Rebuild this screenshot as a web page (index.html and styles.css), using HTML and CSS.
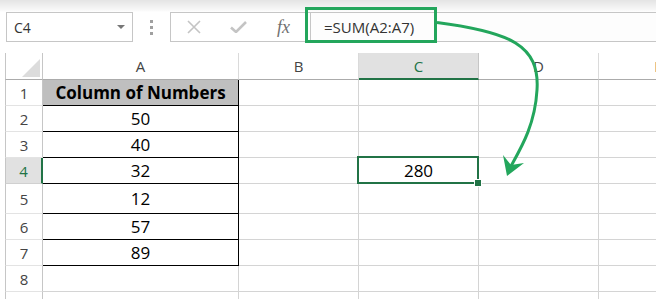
FILE: index.html
```html
<!DOCTYPE html>
<html lang="en">
<head>
  <meta charset="UTF-8" />
  <title>SUM formula</title>
  <link rel="stylesheet" href="styles.css">
</head>
<body>

  <!-- Formula bar -->
  <div class="topbar">
    <div class="namebox"><span>C4</span><i class="caret"></i></div>
    <div class="grip"><i></i><i></i><i></i></div>
    <div class="fxbox">
      <span class="ico">
        <svg width="14" height="14" viewBox="0 0 14 14"><path d="M1 1L13 13M13 1L1 13" stroke="#c4c4c4" stroke-width="1.6" fill="none"/></svg>
      </span>
      <span class="ico">
        <svg width="17" height="12" viewBox="0 0 17 12"><path d="M1 6.5L6 11L16 1" stroke="#c4c4c4" stroke-width="2.6" fill="none"/></svg>
      </span>
      <span class="ico fx">fx</span>
    </div>
    <div class="formula">=SUM(A2:A7)</div>
  </div>

  <!-- Sheet grid -->
  <div class="sheet">
    <div class="corner"><i></i></div>
    <div class="ch">A</div><div class="ch">B</div><div class="ch sel">C</div><div class="ch">D</div><div class="ch">E</div>

    <div class="rh">1</div><div class="c t hd">Column of Numbers</div><div class="c"></div><div class="c"></div><div class="c"></div><div class="c"></div>
    <div class="rh">2</div><div class="c t">50</div><div class="c"></div><div class="c"></div><div class="c"></div><div class="c"></div>
    <div class="rh">3</div><div class="c t">40</div><div class="c"></div><div class="c"></div><div class="c"></div><div class="c"></div>
    <div class="rh sel">4</div><div class="c t">32</div><div class="c"></div><div class="c cur">280</div><div class="c"></div><div class="c"></div>
    <div class="rh">5</div><div class="c t">12</div><div class="c"></div><div class="c"></div><div class="c"></div><div class="c"></div>
    <div class="rh">6</div><div class="c t">57</div><div class="c"></div><div class="c"></div><div class="c"></div><div class="c"></div>
    <div class="rh">7</div><div class="c t">89</div><div class="c"></div><div class="c"></div><div class="c"></div><div class="c"></div>
    <div class="rh">8</div><div class="c"></div><div class="c"></div><div class="c"></div><div class="c"></div><div class="c"></div>
    <div class="rh">9</div><div class="c"></div><div class="c"></div><div class="c"></div><div class="c"></div><div class="c"></div>
  </div>

  <!-- Callout over the formula -->
  <div class="callout"></div>
  <svg class="arrow" width="656" height="299" viewBox="0 0 656 299">
    <path d="M437 22.5C510 32 540 45 537 90C535 125 521 148 511 166" stroke="#23a65c" stroke-width="3" fill="none"/>
    <polygon points="507,176 503,155 511,165 524,163" fill="#23a65c"/>
  </svg>

</body>
</html>
```

FILE: styles.css
```css
* { margin: 0; padding: 0; box-sizing: border-box; }
body {
  width: 656px;
  height: 299px;
  overflow: hidden;
  position: relative;
  background: #fff;
  font-family: "Open Sans", "Liberation Sans", sans-serif;
}

/* formula bar */
.topbar {
  height: 53px;
  display: flex;
  align-items: flex-start;
  padding-top: 12px;
  background: linear-gradient(to bottom, #e4e4e4 0, #f8f8f8 10px, #fff 12px);
}

.namebox {
  margin-left: 6px;
  width: 127px;
  height: 30px;
  border: 1px solid #c6c6c6;
  background: #fff;
  display: flex;
  align-items: center;
  justify-content: space-between;
  padding: 0 7px 0 7px;
  font-size: 14px;
  color: #333;
}

.caret {
  width: 0;
  height: 0;
  border-left: 4px solid transparent;
  border-right: 4px solid transparent;
  border-top: 4px solid #777;
}

.grip {
  width: 37px;
  height: 30px;
  display: flex;
  flex-direction: column;
  align-items: center;
  justify-content: center;
  gap: 3px;
}
.grip i {
  width: 3px;
  height: 3px;
  background: #a0a0a0;
}

.fxbox {
  width: 141px;
  height: 30px;
  border: 1px solid #c6c6c6;
  background: #fff;
  display: flex;
  align-items: center;
}
.ico {
  width: 45px;
  display: flex;
  justify-content: center;
  align-items: center;
}
.fx {
  font-family: "Liberation Serif", "DejaVu Serif", serif;
  font-style: italic;
  font-size: 18px;
  color: #707070;
  padding-top: 1px;
}

.formula {
  flex: 1;
  height: 30px;
  border-top: 1px solid #c6c6c6;
  border-bottom: 1px solid #c6c6c6;
  background: #fdfdfd;
  padding-left: 13px;
  font-size: 15px;
  line-height: 28px;
  color: #333;
}

/* sheet */
.sheet {
  margin-left: 5px;
  display: grid;
  grid-template-columns: 38px 196px 120px 120px 120px 120px;
  grid-template-rows: 27px 26px 26px 26px 26px 30px 26px 26px 26px 26px;
}

.corner {
  border-left: 1px solid #c6c6c6;
  border-right: 1px solid #c6c6c6;
  border-bottom: 1px solid #ababab;
  display: flex;
  align-items: flex-end;
  justify-content: flex-end;
  padding: 0 2px 2px 0;
}
.corner i {
  width: 0;
  height: 0;
  border-left: 18px solid transparent;
  border-bottom: 18px solid #dcdcdc;
}

.ch {
  border-right: 1px solid #dadada;
  border-bottom: 1px solid #ababab;
  display: flex;
  align-items: center;
  justify-content: center;
  font-size: 15px;
  color: #444;
}
.ch.sel {
  background: #e1e1e1;
  color: #217346;
  border-bottom: 2px solid #217346;
  border-right-color: #c6c6c6;
}

.rh {
  border-left: 1px solid #c6c6c6;
  border-right: 1px solid #c6c6c6;
  border-bottom: 1px solid #e3e3e3;
  display: flex;
  align-items: center;
  justify-content: center;
  font-size: 15px;
  color: #444;
}
.rh.sel {
  background: #e1e1e1;
  color: #217346;
  border-right: 2px solid #217346;
  border-bottom-color: #d0d0d0;
}

.c {
  border-right: 1px solid #d4d4d4;
  border-bottom: 1px solid #d4d4d4;
  display: flex;
  align-items: center;
  justify-content: center;
  font-size: 17px;
  color: #000;
}
.c.t {
  border-right-color: #000;
  border-bottom-color: #000;
}
.c.hd {
  background: #bfbfbf;
  font-weight: 700;
}

.c.cur { position: relative; }
.c.cur::before {
  content: "";
  position: absolute;
  top: -2px; left: -2px; right: -1px; bottom: -1px;
  border: 2px solid #217346;
}
.c.cur::after {
  content: "";
  position: absolute;
  right: -4px;
  bottom: -4px;
  width: 6px;
  height: 6px;
  background: #217346;
  border: 1px solid #fff;
}

/* annotation */
.callout {
  position: absolute;
  left: 305px;
  top: 7px;
  width: 132px;
  height: 36px;
  border: 3px solid #23a65c;
}

.arrow {
  position: absolute;
  left: 0;
  top: 0;
  pointer-events: none;
}
```
